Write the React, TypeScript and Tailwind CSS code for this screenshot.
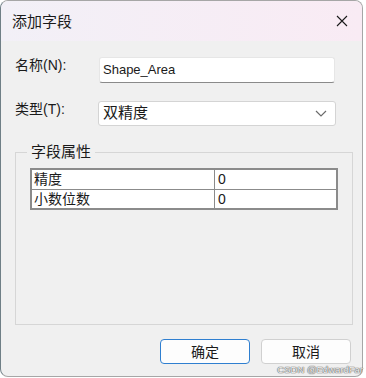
import React from 'react'

const font = { fontFamily: "'Liberation Sans', 'Noto Sans CJK SC', sans-serif" }

function CloseIcon() {
  return (
    <svg width="12" height="12" viewBox="0 0 12 12" className="text-[#1a1a1a]">
      <path d="M1 1 L11 11 M11 1 L1 11" stroke="currentColor" strokeWidth="1.1" fill="none" />
    </svg>
  )
}

function Chevron() {
  return (
    <svg width="12" height="7" viewBox="0 0 12 7" className="text-[#6b6b6b]">
      <path d="M1 1 L6 6 L11 1" stroke="currentColor" strokeWidth="1.2" fill="none" />
    </svg>
  )
}

const props = [
  { name: '精度', value: '0' },
  { name: '小数位数', value: '0' },
]

export default function App() {
  return (
    <div className="w-[366px] h-[378px] bg-white relative overflow-hidden text-[#1a1a1a]" style={font}>
      <div className="w-[363px] h-[377px] rounded-[8px] border border-[#a6a6a6] border-l-[#6f7f86] bg-[#f0f0f0] overflow-hidden flex flex-col">
        {/* title bar */}
        <div className="h-[40px] shrink-0 flex items-center justify-between pl-[11px] pr-[14px] bg-gradient-to-r from-[#f2f0f7] to-[#f9ebf4]">
          <span className="text-[15px] leading-none">添加字段</span>
          <CloseIcon />
        </div>

        <div className="flex-1 flex flex-col">
          {/* name row */}
          <div className="flex items-start mt-[16px]">
            <span className="ml-[14px] w-[84px] text-[14px] leading-[20px] mt-[-2px]">名称(N):</span>
            <div className="w-[236px] h-[26px] bg-white border border-[#e6e6e6] border-b-[#8a8a8a] rounded-[3px] flex items-center pl-[3px] text-[13px]">
              Shape_Area
            </div>
          </div>

          {/* type row */}
          <div className="flex items-start mt-[18px]">
            <span className="ml-[14px] w-[83px] text-[14px] leading-[20px] mt-[-2px]">类型(T):</span>
            <div className="w-[238px] h-[25px] bg-white border border-[#d4d4d4] rounded-[3px] flex items-center justify-between pl-[4px] pr-[8px] text-[15px]">
              <span>双精度</span>
              <Chevron />
            </div>
          </div>

          {/* group box */}
          <fieldset className="ml-[14px] mt-[16px] w-[338px] h-[183px] border border-[#d6d6d6] px-[14px]">
            <legend className="ml-[-3px] px-[4px] text-[15px] leading-[20px]">字段属性</legend>
            <div className="mt-[6px] border-2 border-[#8b8b8b] bg-white">
              {props.map((p, i) => (
                <div key={p.name} className={`flex h-[19px] text-[14px] leading-[19px] ${i > 0 ? 'border-t border-[#8b8b8b]' : ''}`}>
                  <div className="w-[183px] pl-[2px] border-r border-[#8b8b8b]">{p.name}</div>
                  <div className="flex-1 pl-[3px]">{p.value}</div>
                </div>
              ))}
            </div>
          </fieldset>

          {/* buttons */}
          <div className="flex justify-end gap-[11px] mr-[11px] mt-[14px]">
            <button className="w-[90px] h-[25px] rounded-[4px] border-[1.5px] border-[#2f7fd0] bg-[#fdfdfd] text-[14px] leading-none">确定</button>
            <button className="w-[90px] h-[25px] rounded-[4px] border border-[#d0d0d0] bg-[#fdfdfd] text-[14px] leading-none">取消</button>
          </div>
        </div>
      </div>
      <span className="absolute right-[3px] bottom-[4px] text-[9.5px] leading-none text-[#f4f4f4] [text-shadow:0_0_1px_#666,0_0_1px_#666,0_0_1px_#666]">CSDN @EdwardFar</span>
    </div>
  )
}
